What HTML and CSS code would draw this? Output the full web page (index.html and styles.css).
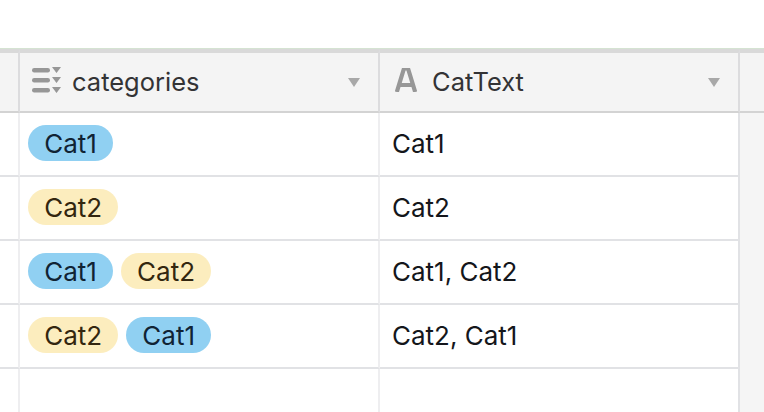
FILE: index.html
```html
<!DOCTYPE html>
<html lang="en">
<head>
<meta charset="utf-8">
<title>Table</title>
<link rel="stylesheet" href="styles.css">
</head>
<body>
<div class="page">
  <div class="topbar"></div>
  <div class="row head">
    <div class="gutter"></div>
    <div class="cell hcell">
      <svg class="ficon" width="29" height="26" viewBox="0 0 29 26"><g fill="#979797"><rect x="0" y="1" width="18" height="4.400" rx="2.200"/><rect x="0" y="11" width="18" height="4.400" rx="2.200"/><rect x="0" y="21" width="18" height="4.400" rx="2.200"/><path d="M20 0h9l-4.500 6zM20 10h9l-4.500 6zM20 20h9l-4.500 6z"/></g></svg>
      <span class="hname">categories</span>
      <svg class="caret" width="12" height="9" viewBox="0 0 12 9"><path d="M0 0h12l-6 9z" fill="#a8a8a8"/></svg>
    </div>
    <div class="cell hcell">
      <svg class="ficon a" width="22" height="24" viewBox="0 0 22 24"><path d="M1.800 24L9 0.500h4L20.200 24M5 17h12" fill="none" stroke="#979797" stroke-width="4.200"/></svg>
      <span class="hname">CatText</span>
      <svg class="caret" width="12" height="9" viewBox="0 0 12 9"><path d="M0 0h12l-6 9z" fill="#a8a8a8"/></svg>
    </div>
    <div class="tail"></div>
  </div>
  <div class="row">
    <div class="gutter"></div>
    <div class="cell"><span class="pill blue">Cat1</span></div>
    <div class="cell">Cat1</div>
    <div class="tail"></div>
  </div>
  <div class="row">
    <div class="gutter"></div>
    <div class="cell"><span class="pill cream">Cat2</span></div>
    <div class="cell">Cat2</div>
    <div class="tail"></div>
  </div>
  <div class="row">
    <div class="gutter"></div>
    <div class="cell"><span class="pill blue">Cat1</span><span class="pill cream">Cat2</span></div>
    <div class="cell">Cat1, Cat2</div>
    <div class="tail"></div>
  </div>
  <div class="row">
    <div class="gutter"></div>
    <div class="cell"><span class="pill cream">Cat2</span><span class="pill blue">Cat1</span></div>
    <div class="cell">Cat2, Cat1</div>
    <div class="tail"></div>
  </div>
  <div class="row">
    <div class="gutter"></div>
    <div class="cell"></div>
    <div class="cell"></div>
    <div class="tail"></div>
  </div>
</div>
</body>
</html>
```
FILE: styles.css
```css
html, body {
  margin: 0;
  padding: 0;
  background: #fff;
}
.page {
  width: 764px;
  height: 412px;
  overflow: hidden;
  font-family: Inter, "Liberation Sans", sans-serif;
  font-size: 26px;
  color: #14161b;
}
.topbar {
  height: 49px;
  box-sizing: border-box;
  border-bottom: 1px solid #d5e3d2;
}
.row {
  display: grid;
  grid-template-columns: 20px 360px 360px 24px;
  height: 64px;
}
.gutter, .cell {
  border-right: 2px solid #eeeef0;
  border-bottom: 2px solid #e1e2e5;
  box-sizing: border-box;
  background: #fff;
}
.cell {
  display: flex;
  align-items: center;
  gap: 8px;
  padding-left: 8px;
  padding-bottom: 2px;
  white-space: nowrap;
}
.cell + .cell { padding-left: 12px; border-right-color: #e1e2e5; }
.tail {
  background: #f5f5f5;
}
.head .gutter, .head .cell, .head .tail {
  background: #f4f4f4;
  border-top: 4px solid #d9d9d9;
  border-bottom: 2px solid #d3d3d3;
  border-right-color: #dcdcde;
  box-sizing: border-box;
}
.hcell {
  font-size: 25.500px;
  color: #333335;
}
.cell.hcell { padding-left: 12px; gap: 0; }
.cell.hcell + .cell.hcell { padding-left: 15px; }
.ficon { flex: none; margin: 0 12px 2px 0; }
.ficon.a { margin: 0 16px 2px 0; }
.hname { flex: 1; margin-left: -1px; }
.caret { flex: none; margin: 3px 18px 0 0; }
.pill {
  display: inline-flex;
  align-items: center;
  height: 36px;
  padding: 0 16px 0 16.200px;
  border-radius: 18px;
}
.pill.blue { background: #90d0f2; color: #102334; }
.pill.cream { background: #fcedbe; color: #33260f; }
```
